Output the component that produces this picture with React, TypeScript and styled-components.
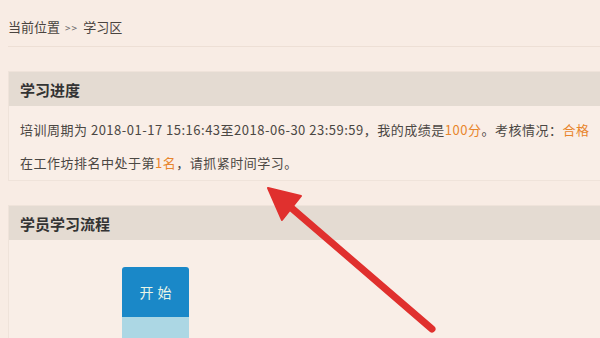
import React from "react";
import styled, { createGlobalStyle } from "styled-components";

const GlobalStyle = createGlobalStyle`
  html, body {
    margin: 0;
    padding: 0;
    background: #f8ece4;
    overflow: hidden;
  }
  body {
    font-family: "Noto Sans CJK SC", "Liberation Sans", sans-serif;
    color: #444;
  }
`;

const Page = styled.div`
  position: relative;
  width: 600px;
  height: 338px;
  padding: 0 0 0 8px;
  box-sizing: border-box;
  overflow: hidden;
`;

const Breadcrumb = styled.div`
  height: 47px;
  padding-top: 17px;
  box-sizing: border-box;
  font-size: 13px;
  line-height: 20px;
  color: #4a4440;
  border-bottom: 1px solid #eddfd5;
`;

const Sep = styled.span`
  font-size: 10px;
  color: #666;
  margin: 0 5px;
  letter-spacing: 1px;
`;

const Card = styled.section<{ $top: number }>`
  margin-top: ${(p) => p.$top}px;
  width: 620px;
  background: #f9eee7;
  border: 1px solid #efe3da;
  border-right: none;
`;

const CardHeader = styled.div`
  height: 34px;
  background: #e4dbd2;
  display: flex;
  align-items: center;
  padding-left: 11px;
  font-size: 15px;
  font-weight: bold;
  color: #333;
`;

const CardBody = styled.div`
  padding: 7px 11px 1px;
  font-size: 13px;
  letter-spacing: 0.5px;
  line-height: 33px;
  color: #4b4743;
`;

const Line = styled.p`
  margin: 0;
  white-space: nowrap;
`;

const Hl = styled.span`
  color: #e8852c;
`;

const FlowArea = styled.div`
  height: 120px;
  padding: 27px 0 0 113px;
  box-sizing: border-box;
`;

const FlowStep = styled.div`
  width: 67px;
  display: flex;
  flex-direction: column;
`;

const StartBtn = styled.div`
  height: 50px;
  background: #1a88c8;
  border-radius: 3px 3px 0 0;
  display: flex;
  align-items: center;
  justify-content: center;
  color: #e9f5e6;
  font-size: 14px;
  letter-spacing: 4px;
  padding-left: 4px;
`;

const NextStep = styled.div`
  height: 30px;
  background: #acd7e4;
`;

const Arrow = styled.svg`
  position: absolute;
  left: 0;
  top: 0;
  pointer-events: none;
`;

export default function App() {
  return (
    <>
      <GlobalStyle />
      <Page>
        <Breadcrumb>
          当前位置<Sep>&gt;&gt;</Sep>学习区
        </Breadcrumb>
        <Card $top={24}>
          <CardHeader>学习进度</CardHeader>
          <CardBody>
            <Line>
              培训周期为 2018-01-17 15:16:43至2018-06-30 23:59:59，我的成绩是<Hl>100分</Hl>。考核情况：<Hl>合格</Hl>
            </Line>
            <Line>
              在工作坊排名中处于第<Hl>1名</Hl>，请抓紧时间学习。
            </Line>
          </CardBody>
        </Card>
        <Card $top={24}>
          <CardHeader>学员学习流程</CardHeader>
          <FlowArea>
            <FlowStep>
              <StartBtn>开始</StartBtn>
              <NextStep />
            </FlowStep>
          </FlowArea>
        </Card>
        <Arrow width="600" height="338" viewBox="0 0 600 338">
          <line x1="432" y1="329" x2="288" y2="205" stroke="#e0302e" strokeWidth="7" strokeLinecap="round" />
          <polygon points="268,188 301,196 282,220" fill="#e0302e" stroke="#e0302e" strokeWidth="2" strokeLinejoin="round" />
        </Arrow>
      </Page>
    </>
  );
}
